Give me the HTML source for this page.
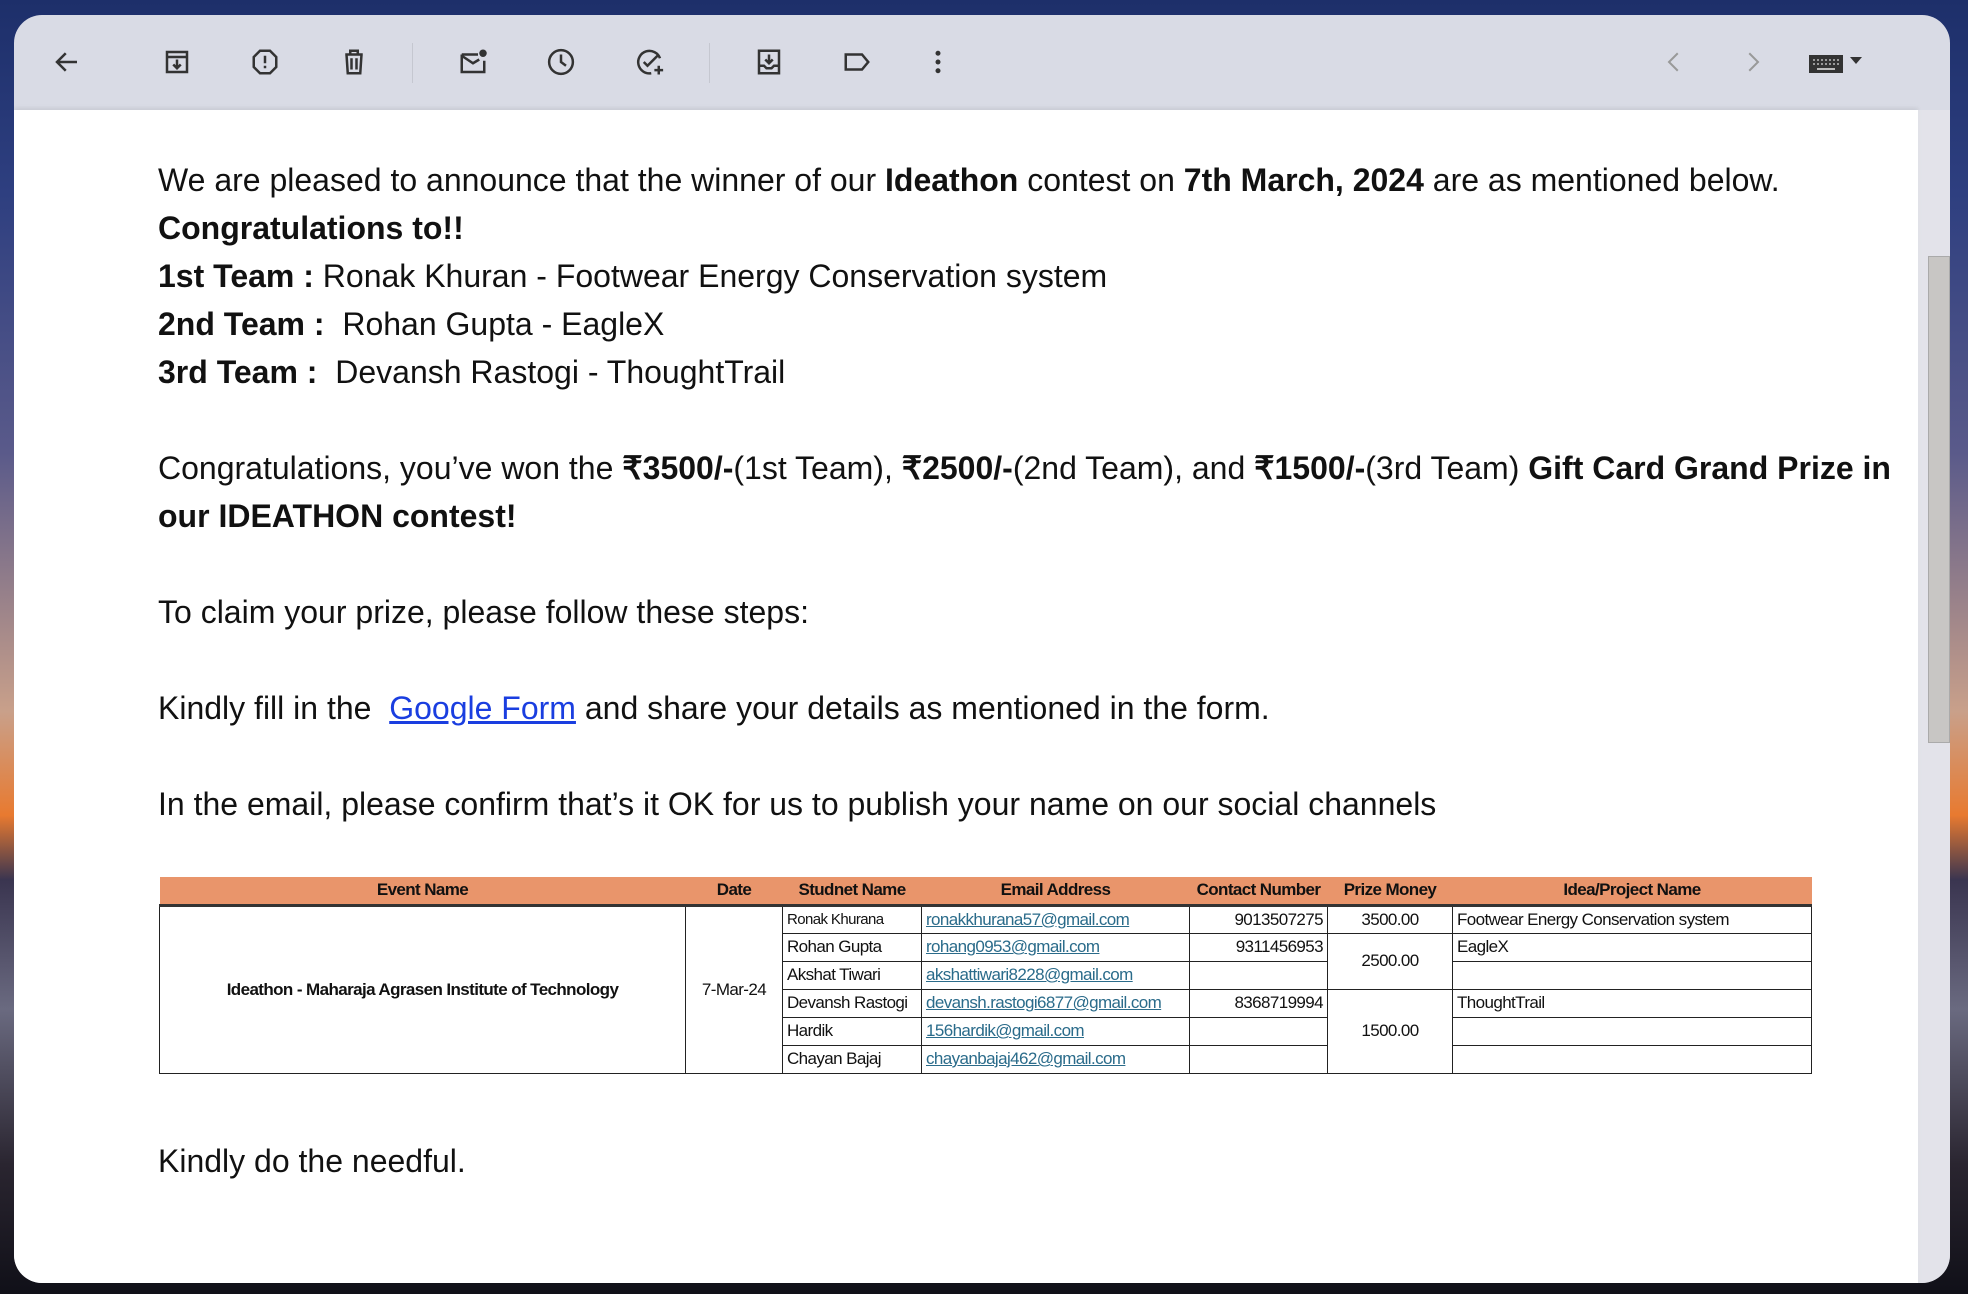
<!DOCTYPE html>
<html><head><meta charset="utf-8"><style>
*{margin:0;padding:0;box-sizing:border-box}
html,body{width:1968px;height:1294px;overflow:hidden}
body{position:relative;background:linear-gradient(180deg,#1d2f6a 0%,#2e3f80 15%,#5a5a8a 35%,#c9a08a 55%,#e87a30 63%,#3a3550 68%,#6a6a80 78%,#2a2530 90%,#101018 100%);font-family:"Liberation Sans",Arial,sans-serif}
.win{position:absolute;left:14px;top:15px;width:1936px;height:1268px;border-radius:28px;background:#d9dbe5;overflow:hidden}
.content{position:absolute;left:0;top:95px;width:1904px;height:1200px;background:#fff;box-shadow:0 -2px 4px rgba(0,0,0,.08)}
.track{position:absolute;left:1904px;top:95px;width:32px;height:1200px;background:rgba(230,230,235,.75)}
.thumb{position:absolute;left:1914px;top:241px;width:22px;height:487px;background:#c8c6c4;border:1px solid #aaa}
.ic{position:absolute;top:32px;width:30px;height:30px}
.sep{position:absolute;top:28px;width:1px;height:40px;background:#c5c7d0}
.t{position:absolute;left:158px;font-size:32px;color:#111;white-space:nowrap;line-height:36px}
b{font-weight:bold}
a{color:#1a3ee0;text-decoration:underline}
table{position:absolute;left:159px;top:877px;width:1652px;border-collapse:collapse;font-family:"Liberation Sans Narrow","Liberation Sans",sans-serif;font-size:17px;letter-spacing:-0.6px;color:#111;table-layout:fixed}
td,th{border:1.5px solid #222;height:28px;padding:0 4px;white-space:nowrap;overflow:hidden;line-height:24px}
th{background:#e9956b;font-weight:bold;border:none;border-bottom:3px solid #333;height:28px}
td.e{color:#2a6b8a;text-decoration:underline}
.r{text-align:right}.c{text-align:center}
</style></head><body>
<div class="win">
 <div class="content"></div>
 <div class="track"></div><div class="thumb"></div>
 <svg class="ic" style="left:38px" viewBox="0 0 24 24"><path d="M20 12H5M11 5l-7 7 7 7" fill="none" stroke="#333" stroke-width="2"/></svg>
 <svg class="ic" style="left:148px" viewBox="0 0 24 24"><path d="M4 4h16v16H4zM4 8h16M12 10v7M9 14l3 3 3-3" fill="none" stroke="#333" stroke-width="2"/></svg>
 <svg class="ic" style="left:236px" viewBox="0 0 24 24"><path d="M8 3h8l5 5v8l-5 5H8l-5-5V8z" fill="none" stroke="#333" stroke-width="2"/><path d="M12 7v6M12 15v2" stroke="#333" stroke-width="2"/></svg>
 <svg class="ic" style="left:325px" viewBox="0 0 24 24"><path d="M5 6h14M9 6V3h6v3M6 6l1 15h10l1-15M10 9v9M14 9v9" fill="none" stroke="#333" stroke-width="2"/></svg>
 <div class="sep" style="left:398px"></div>
 <svg class="ic" style="left:444px" viewBox="0 0 24 24"><path d="M3 6h13M3 6v14h18v-9M3 7l9 6 5-3" fill="none" stroke="#333" stroke-width="2"/><circle cx="20" cy="5" r="3" fill="#333"/></svg>
 <svg class="ic" style="left:532px" viewBox="0 0 24 24"><circle cx="12" cy="12" r="9.5" fill="none" stroke="#333" stroke-width="2"/><path d="M12 6v6l4 3" fill="none" stroke="#333" stroke-width="2"/></svg>
 <svg class="ic" style="left:621px" viewBox="0 0 24 24"><path d="M20 9A9 9 0 1 0 13 21M7 12l3 3 8-8M19 15v7M15.5 18.5h7" fill="none" stroke="#333" stroke-width="2"/></svg>
 <div class="sep" style="left:695px"></div>
 <svg class="ic" style="left:740px" viewBox="0 0 24 24"><path d="M4 3h16v18H4zM4 15h4l2 2h4l2-2h4M12 6v7M9 10l3 3 3-3" fill="none" stroke="#333" stroke-width="2"/></svg>
 <svg class="ic" style="left:828px" viewBox="0 0 24 24"><path d="M3 6h13l5 6-5 6H3z" fill="none" stroke="#333" stroke-width="2"/></svg>
 <svg class="ic" style="left:909px" viewBox="0 0 24 24"><circle cx="12" cy="5" r="2" fill="#333"/><circle cx="12" cy="12" r="2" fill="#333"/><circle cx="12" cy="19" r="2" fill="#333"/></svg>
 <svg class="ic" style="left:1645px" viewBox="0 0 24 24"><path d="M15 5l-7 7 7 7" fill="none" stroke="#999" stroke-width="1.6"/></svg>
 <svg class="ic" style="left:1724px" viewBox="0 0 24 24"><path d="M9 5l7 7-7 7" fill="none" stroke="#999" stroke-width="1.6"/></svg>
 <svg style="position:absolute;left:1794px;top:36px;width:56px;height:24px" viewBox="0 0 56 24"><rect x="1" y="4" width="34" height="18" fill="#333"/><path d="M5 9h26M5 13h26" stroke="#bbb" stroke-width="1.5" stroke-dasharray="2 2"/><path d="M9 18h18" stroke="#bbb" stroke-width="2"/><path d="M42 6h12l-6 7z" fill="#333"/></svg>
</div>

<div class="t" style="top:162px">We are pleased to announce that the winner of our <b>Ideathon</b> contest on <b>7th March, 2024</b> are as mentioned below.</div>
<div class="t" style="top:210px"><b>Congratulations to!!</b></div>
<div class="t" style="top:258px"><b>1st Team :</b> Ronak Khuran - Footwear Energy Conservation system</div>
<div class="t" style="top:306px"><b>2nd Team :</b>&nbsp; Rohan Gupta - EagleX</div>
<div class="t" style="top:354px"><b>3rd Team :</b>&nbsp; Devansh Rastogi - ThoughtTrail</div>
<div class="t" style="top:450px">Congratulations, you’ve won the <b>₹3500/-</b>(1st Team), <b>₹2500/-</b>(2nd Team), and <b>₹1500/-</b>(3rd Team) <b>Gift Card Grand Prize in</b></div>
<div class="t" style="top:498px"><b>our IDEATHON contest!</b></div>
<div class="t" style="top:594px">To claim your prize, please follow these steps:</div>
<div class="t" style="top:690px">Kindly fill in the&nbsp; <a>Google Form</a> and share your details as mentioned in the form.</div>
<div class="t" style="top:786px">In the email, please confirm that’s it OK for us to publish your name on our social channels</div>
<div class="t" style="top:1143px">Kindly do the needful.</div>

<table>
<colgroup><col style="width:526px"><col style="width:97px"><col style="width:139px"><col style="width:268px"><col style="width:138px"><col style="width:125px"><col style="width:359px"></colgroup>
<tr><th>Event Name</th><th>Date</th><th>Studnet Name</th><th>Email Address</th><th>Contact Number</th><th>Prize Money</th><th>Idea/Project Name</th></tr>
<tr><td rowspan="6" class="c"><b>Ideathon - Maharaja Agrasen Institute of Technology</b></td><td rowspan="6" class="c">7-Mar-24</td><td style="font-size:15px">Ronak Khurana</td><td class="e">ronakkhurana57@gmail.com</td><td class="r">9013507275</td><td class="c">3500.00</td><td>Footwear Energy Conservation system</td></tr>
<tr><td>Rohan Gupta</td><td class="e">rohang0953@gmail.com</td><td class="r">9311456953</td><td rowspan="2" class="c">2500.00</td><td>EagleX</td></tr>
<tr><td>Akshat Tiwari</td><td class="e">akshattiwari8228@gmail.com</td><td></td><td></td></tr>
<tr><td>Devansh Rastogi</td><td class="e">devansh.rastogi6877@gmail.com</td><td class="r">8368719994</td><td rowspan="3" class="c">1500.00</td><td>ThoughtTrail</td></tr>
<tr><td>Hardik</td><td class="e">156hardik@gmail.com</td><td></td><td></td></tr>
<tr><td>Chayan Bajaj</td><td class="e">chayanbajaj462@gmail.com</td><td></td><td></td></tr>
</table>
</body></html>
